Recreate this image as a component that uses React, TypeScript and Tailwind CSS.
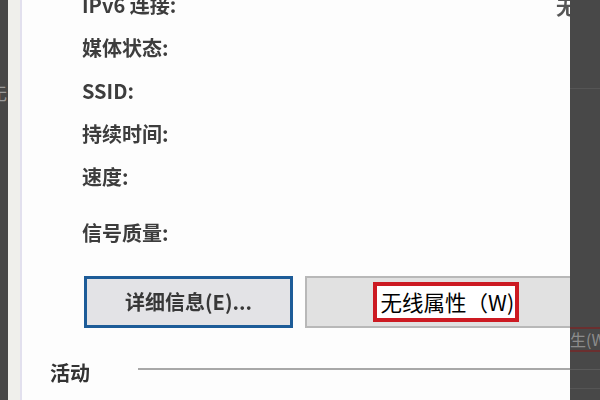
export default function App() {
  const labels = ['IPv6 连接:', '媒体状态:', 'SSID:', '持续时间:', '速度:'];

  return (
    <div className="w-[600px] h-[400px] flex overflow-hidden bg-white font-['Noto_Sans_CJK_SC','Noto_Sans',sans-serif]">
      {/* window behind, left edge */}
      <div className="w-[8px] shrink-0 bg-[#474747] overflow-hidden relative">
        <span className="absolute left-[-10px] top-[80px] text-[17px] text-[#9a9a9a] whitespace-nowrap">无</span>
      </div>
      <div className="w-[14px] shrink-0 bg-[#efefeb] border-r-2 border-[#e2e0ee]" />

      {/* dialog body */}
      <div className="flex-1 min-w-0 overflow-hidden relative flex flex-col bg-[#fdfdfd]">
        <span className="absolute right-[-6px] top-[-8px] text-[20px] font-bold text-[#555] blur-[0.6px]">无</span>

        <div className="flex flex-col pl-[60px] mt-[-17px] text-[20px] font-bold text-[#3d3d3d] blur-[0.7px]">
          {labels.map((l) => (
            <div key={l} className="h-[43px] flex items-center">
              {l}
            </div>
          ))}
          <div className="h-[43px] flex items-center mt-[13px]">信号质量:</div>
        </div>

        <div className="flex gap-[12px] ml-[62px] mt-[22px]">
          <button className="w-[209px] h-[52px] shrink-0 bg-[#e3e3e6] border-[3px] border-[#1d5c98] flex items-center justify-center text-[20px] font-bold text-[#383838]">
            <span className="blur-[0.7px]">详细信息(E)...</span>
          </button>
          <button className="w-[281px] h-[52px] shrink-0 bg-[#e1e1e1] border-2 border-[#b8b8b8] flex items-center justify-center">
            <span className="w-[146px] h-[40px] border-4 border-[#cc1a22] bg-white flex items-center pl-[4px] text-[21.5px] text-black whitespace-nowrap leading-none">
              无线属性（W)
            </span>
          </button>
        </div>

        <div className="flex items-center ml-[28px] mt-[30px]">
          <span className="text-[20px] font-bold text-[#333] blur-[0.7px]">活动</span>
          <div className="flex-1 h-[2px] bg-[#a8a8a8] ml-[48px] mt-[-8px]" />
        </div>
      </div>

      {/* window behind, right edge */}
      <div className="w-[30px] shrink-0 bg-[#484848] flex flex-col overflow-hidden">
        <div className="h-[1px] bg-[#555] mt-[88px]" />
        <div className="h-[2px] bg-[#6a2f2f] mt-[238px]" />
        <div className="h-[21px] text-[16px] text-[#8c8c8c] whitespace-nowrap leading-[21px]">生(W</div>
        <div className="h-[2px] bg-[#6a2f2f]" />
        <div className="h-[1px] bg-[#5a5a5a] mt-[17px]" />
        <div className="h-[1px] bg-[#555] mt-[18px]" />
      </div>
    </div>
  );
}
